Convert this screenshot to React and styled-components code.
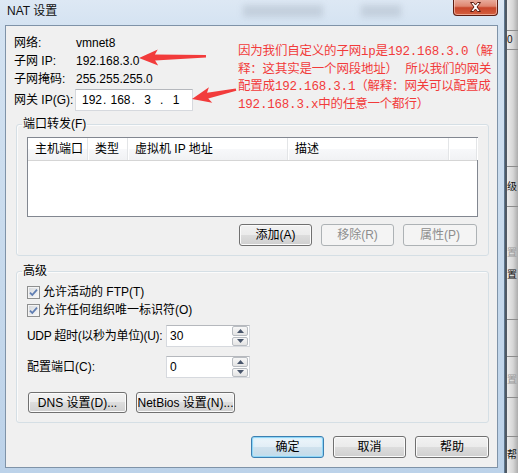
import styled, { createGlobalStyle, css } from "styled-components";

const uiFont = `"Liberation Sans", "Noto Sans CJK SC", sans-serif`;

const GlobalStyle = createGlobalStyle`
  html, body {
    margin: 0;
    padding: 0;
    background: #c9dcee;
  }
  body {
    font-family: ${uiFont};
    font-size: 12px;
    color: #000;
  }
  * {
    box-sizing: border-box;
  }
`;

const Screen = styled.div`
  position: relative;
  width: 518px;
  height: 473px;
  overflow: hidden;
  display: flex;
`;

const Window = styled.div`
  width: 505px;
  flex: none;
  display: flex;
  flex-direction: column;
  padding: 0 6px 5px 5px;
  border-right: 1px solid #5f7890;
  background: linear-gradient(180deg, #dde8f4 0, #d3e2f1 30px, #c6d9ec 60%, #bcd2e9 100%);
`;

const TitleBar = styled.div`
  height: 25px;
  flex: none;
  display: flex;
  align-items: flex-start;
`;

const Title = styled.div`
  margin: 4px 0 0 2px;
  line-height: 14px;
  font-size: 12px;
  color: #111;
`;

const GlassBlob = styled.div`
  width: ${(p) => p.$w}px;
  height: 12px;
  margin: 5px 0 0 ${(p) => p.$ml}px;
  background: rgba(110, 120, 135, 0.2);
  filter: blur(3px);
`;

const CloseBtn = styled.div`
  margin-left: auto;
  width: 45px;
  height: 17px;
  margin-top: -1px;
  display: flex;
  align-items: center;
  justify-content: center;
  border: 1px solid #5c1d12;
  border-top: none;
  border-radius: 0 0 4px 4px;
  background: linear-gradient(180deg, #eab0a2 0%, #df8670 45%, #c8462b 55%, #d4603f 100%);
  box-shadow: inset 0 0 0 1px rgba(255, 220, 210, 0.55);
`;

const Client = styled.div`
  flex: 1;
  display: flex;
  flex-direction: column;
  padding: 8px 8px 9px 8px;
  background: #f0f0f0;
  border: 1px solid #7f93a8;
`;

const InfoGrid = styled.div`
  display: grid;
  grid-template-columns: 62px 1fr;
  grid-auto-rows: 18px;
  align-items: center;
  line-height: 14px;
`;

const GatewayRow = styled.div`
  margin-top: 1px;
  height: 22px;
  display: grid;
  grid-template-columns: 61px auto;
  align-items: center;
  line-height: 14px;
`;

const IpBox = styled.div`
  width: 118px;
  height: 22px;
  display: flex;
  align-items: center;
  padding-left: 6px;
  background: #fff;
  border: 1px solid #d6d9de;
  border-top-color: #b5b8bd;
  line-height: 14px;
`;

const Octet = styled.span`
  width: 17px;
  text-align: center;
`;

const Dot = styled.span`
  width: 11.5px;
  text-align: center;
`;

const Group = styled.fieldset`
  margin: ${(p) => p.$mt}px 0 0 2px;
  padding: ${(p) => p.$pt}px 10px 9px 10px;
  min-width: 0;
  border: 1px solid #d5dfe5;
  border-radius: 3px;
  box-shadow: inset 1px 1px 0 #fbfbfb;
`;

const GroupTitle = styled.legend`
  margin-left: -5px;
  padding: 0 1px;
  line-height: 14px;
  font-size: 12px;
`;

const ListView = styled.div`
  height: 80px;
  background: #fff;
  border: 1px solid #828790;
`;

const HeaderRow = styled.div`
  height: 23px;
  display: flex;
  border-bottom: 1px solid #d5d5d5;
  background: linear-gradient(180deg, #ffffff 0%, #ffffff 50%, #f7f8fa 50%, #f1f2f4 100%);
`;

const HeaderCell = styled.div`
  width: ${(p) => (p.$w ? `${p.$w}px` : "auto")};
  flex: ${(p) => (p.$w ? "none" : 1)};
  padding: 2px 0 0 7px;
  line-height: 19px;
  white-space: nowrap;
  border-right: 1px solid #e3e5e7;
  box-shadow: 1px 0 0 #fff;
`;

const ButtonRow = styled.div`
  margin-top: ${(p) => p.$mt}px;
  display: flex;
  justify-content: ${(p) => (p.$left ? "flex-start" : "flex-end")};
  gap: ${(p) => p.$gap || 9}px;
  padding-left: ${(p) => p.$pl || 0}px;
  padding-right: ${(p) => p.$pr || 0}px;
`;

const Button = styled.button`
  width: ${(p) => p.$w}px;
  height: ${(p) => p.$h || 22}px;
  padding: 0;
  font-family: ${uiFont};
  font-size: 12px;
  line-height: 14px;
  color: #000;
  white-space: nowrap;
  border: 1px solid #707070;
  border-radius: 3px;
  background: linear-gradient(180deg, #f2f2f2 0%, #ebebeb 49%, #dddddd 50%, #cfcfcf 100%);
  box-shadow: inset 0 0 0 1px #fbfbfb;

  ${(p) =>
    p.disabled &&
    css`
      color: #8d8d8d;
      border-color: #adb2b5;
      background: #f4f4f4;
      box-shadow: none;
    `}

  ${(p) =>
    p.$primary &&
    css`
      border-color: #3c7fb1;
      background: linear-gradient(180deg, #eef6fb 0%, #e2eef6 49%, #d0e2ee 50%, #c3d9e7 100%);
      box-shadow: inset 0 0 0 1px #8ed6f7, inset 0 0 3px 1px #bfe8fb;
    `}
`;

const CheckRow = styled.label`
  height: 18px;
  display: flex;
  align-items: center;
  gap: 3px;
  line-height: 14px;
`;

const FieldRow = styled.div`
  margin-top: ${(p) => p.$mt}px;
  height: 22px;
  display: grid;
  grid-template-columns: 139px auto;
  align-items: center;
  line-height: 14px;
`;

const FieldLabel = styled.span`
  white-space: nowrap;
  letter-spacing: ${(p) => (p.$tight ? "-0.3px" : "normal")};
`;

const SpinBox = styled.div`
  width: 84px;
  height: 22px;
  display: flex;
  align-items: center;
  justify-content: space-between;
  padding: 0 1px 0 3px;
  background: #fff;
  border: 1px solid #d6d9de;
  border-top-color: #b5b8bd;
`;

const SpinButtons = styled.div`
  width: 16px;
  height: 20px;
  display: flex;
  flex-direction: column;
  gap: 1px;
`;

const SpinButton = styled.div`
  flex: 1;
  display: flex;
  align-items: center;
  justify-content: center;
  border: 1px solid #b9bdc2;
  border-radius: 2px;
  background: linear-gradient(180deg, #f7f7f7, #e4e4e4);
`;

const Annotation = styled.div`
  position: absolute;
  left: 238px;
  top: 44px;
  font-family: "Liberation Mono", "Noto Sans CJK SC", monospace;
  font-size: 12.5px;
  line-height: 17.5px;
  letter-spacing: -0.2px;
  color: #f23b3b;
  white-space: nowrap;
`;

const ArrowLayer = styled.svg`
  position: absolute;
  left: 0;
  top: 0;
  pointer-events: none;
`;

const Backdrop = styled.div`
  flex: 1;
  display: flex;
  flex-direction: column;
  overflow: hidden;
  border-left: 2px solid #4f5964;
  background: linear-gradient(90deg, #ececec 0%, #d6d6d6 55%, #adadad 100%);
`;

const BackdropCell = styled.div`
  height: ${(p) => p.$h}px;
  flex: none;
  display: flex;
  align-items: center;
  white-space: nowrap;
  font-size: 10px;
  line-height: 12px;
  color: ${(p) => (p.$dim ? "#9a9a9a" : "#111")};
  border-bottom: ${(p) => (p.$line ? "1px solid #8c8c8c" : "none")};
`;

const CheckBox = () => (
  <svg width="13" height="13" viewBox="0 0 13 13">
    <defs>
      <linearGradient id="cbg" x1="0" y1="0" x2="1" y2="1">
        <stop offset="0" stopColor="#d6d9dd" />
        <stop offset="1" stopColor="#f7f7f7" />
      </linearGradient>
    </defs>
    <rect x="0.5" y="0.5" width="12" height="12" fill="#f4f4f4" stroke="#8e8f8f" />
    <rect x="2" y="2" width="9" height="9" fill="url(#cbg)" />
    <path d="M3 6.6 L5.3 9 L10 3.6" fill="none" stroke="#5f7db2" strokeWidth="1.8" />
  </svg>
);

const Tri = ({ up }) => (
  <svg width="7" height="4" viewBox="0 0 7 4">
    <path d={up ? "M0 4 L3.5 0 L7 4 Z" : "M0 0 L3.5 4 L7 0 Z"} fill="#48556b" />
  </svg>
);

const Spinner = ({ value }) => (
  <SpinBox>
    <span>{value}</span>
    <SpinButtons>
      <SpinButton>
        <Tri up />
      </SpinButton>
      <SpinButton>
        <Tri />
      </SpinButton>
    </SpinButtons>
  </SpinBox>
);

const arrowPath = (len) =>
  `M0 0 L19 -8 L16 -3 L${len} -1.2 L${len} 1.2 L16 3 L19 8 Z`;

const backdropCells = [
  { h: 31, line: true },
  { h: 19, text: "0", line: true },
  { h: 117, line: true },
  { h: 40, text: "级", line: true },
  { h: 36 },
  { h: 20, text: "置", dim: true },
  { h: 24, text: "置" },
  { h: 33, line: true },
  { h: 37, line: true },
  { h: 13 },
  { h: 20, text: "置", dim: true },
  { h: 8, line: true },
  { h: 39, line: true },
  { h: 36, text: "帮" },
];

export default function App() {
  return (
    <>
      <GlobalStyle />
      <Screen>
        <Window>
          <TitleBar>
            <Title>NAT 设置</Title>
            <GlassBlob $w={80} $ml={186} />
            <GlassBlob $w={40} $ml={38} />
            <CloseBtn>
              <svg width="13" height="10" viewBox="0 0 13 10">
                <path
                  d="M1.5 0.5 H4.5 L6.5 3 L8.5 0.5 H11.5 L8 5 L11.5 9.5 H8.5 L6.5 7 L4.5 9.5 H1.5 L5 5 Z"
                  fill="#fff"
                  stroke="#5a1a0e"
                  strokeWidth="1"
                />
              </svg>
            </CloseBtn>
          </TitleBar>

          <Client>
            <InfoGrid>
              <span>网络:</span>
              <span>vmnet8</span>
              <span>子网 IP:</span>
              <span>192.168.3.0</span>
              <span>子网掩码:</span>
              <span>255.255.255.0</span>
            </InfoGrid>
            <GatewayRow>
              <span>网关 IP(G):</span>
              <IpBox>
                <Octet>192</Octet>
                <Dot>.</Dot>
                <Octet>168</Octet>
                <Dot>.</Dot>
                <Octet>3</Octet>
                <Dot>.</Dot>
                <Octet>1</Octet>
              </IpBox>
            </GatewayRow>

            <Group $mt={6} $pt={6}>
              <GroupTitle>端口转发(F)</GroupTitle>
              <ListView>
                <HeaderRow>
                  <HeaderCell $w={60}>主机端口</HeaderCell>
                  <HeaderCell $w={40}>类型</HeaderCell>
                  <HeaderCell $w={160}>虚拟机 IP 地址</HeaderCell>
                  <HeaderCell $w={161}>描述</HeaderCell>
                  <HeaderCell />
                </HeaderRow>
              </ListView>
              <ButtonRow $mt={7} $pr={1}>
                <Button $w={73}>添加(A)</Button>
                <Button $w={73} disabled>
                  移除(R)
                </Button>
                <Button $w={74} disabled>
                  属性(P)
                </Button>
              </ButtonRow>
            </Group>

            <Group $mt={8} $pt={5}>
              <GroupTitle>高级</GroupTitle>
              <CheckRow>
                <CheckBox />
                允许活动的 FTP(T)
              </CheckRow>
              <CheckRow>
                <CheckBox />
                允许任何组织唯一标识符(O)
              </CheckRow>
              <FieldRow $mt={6}>
                <FieldLabel $tight>UDP 超时(以秒为单位)(U):</FieldLabel>
                <Spinner value="30" />
              </FieldRow>
              <FieldRow $mt={9}>
                <FieldLabel>配置端口(C):</FieldLabel>
                <Spinner value="0" />
              </FieldRow>
              <ButtonRow $mt={14} $left $gap={9} $pl={1}>
                <Button $w={99} $h={21}>
                  DNS 设置(D)...
                </Button>
                <Button $w={99} $h={21}>
                  NetBios 设置(N)...
                </Button>
              </ButtonRow>
            </Group>

            <ButtonRow $mt={13}>
              <Button $w={73} $primary>
                确定
              </Button>
              <Button $w={73}>取消</Button>
              <Button $w={74}>帮助</Button>
            </ButtonRow>
          </Client>
        </Window>

        <Backdrop>
          {backdropCells.map((c, i) => (
            <BackdropCell key={i} $h={c.h} $line={c.line} $dim={c.dim}>
              {c.text}
            </BackdropCell>
          ))}
        </Backdrop>

        <ArrowLayer width="518" height="473" viewBox="0 0 518 473">
          <path d={arrowPath(67)} fill="#f23b3b" transform="translate(139 58) rotate(-1.5)" />
          <path d={arrowPath(45)} fill="#f23b3b" transform="translate(192 99) rotate(-12)" />
        </ArrowLayer>

        <Annotation>
          因为我们自定义的子网ip是192.168.3.0（解
          <br />
          释：这其实是一个网段地址） 所以我们的网关
          <br />
          配置成192.168.3.1（解释：网关可以配置成
          <br />
          192.168.3.x中的任意一个都行）
        </Annotation>
      </Screen>
    </>
  );
}
